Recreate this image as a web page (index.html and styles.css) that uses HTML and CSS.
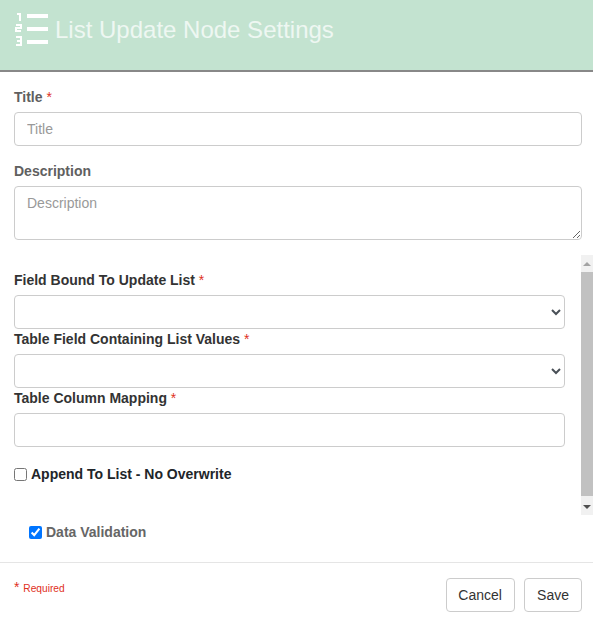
FILE: index.html
```html
<!DOCTYPE html>
<html lang="en">
<head>
  <meta charset="UTF-8">
  <meta name="viewport" content="width=device-width, initial-scale=1.0">
  <title>List Update Node Settings</title>
  <link rel="stylesheet" href="styles.css">
</head>
<body>
  <header class="header">
    <svg class="header-icon" width="34" height="34" viewBox="0 0 34 34" fill="none" stroke="#fff">
      <path d="M3 2h3v7M2 13h5v3h-5v3h5M2 25h5v8h-5M3 29h4" stroke-width="2"/>
      <path d="M13 4h21M13 17h21M13 30h21" stroke-width="4"/>
    </svg>
    <h1 class="header-title">List Update Node Settings</h1>
  </header>

  <main class="content">
    <div class="field">
      <label class="label">Title <span class="req">*</span></label>
      <input class="input" type="text" placeholder="Title">
    </div>
    <div class="field last">
      <label class="label">Description</label>
      <textarea class="input textarea" placeholder="Description"></textarea>
    </div>

    <div class="scroll-area">
      <div class="scroll-body">
        <label class="label dark">Field Bound To Update List <span class="req">*</span></label>
        <select class="input select"></select>
        <label class="label dark">Table Field Containing List Values <span class="req">*</span></label>
        <select class="input select"></select>
        <label class="label dark">Table Column Mapping <span class="req">*</span></label>
        <input class="input" type="text">
        <label class="check dark append"><input type="checkbox"> Append To List - No Overwrite</label>
      </div>
      <div class="scrollbar">
        <div class="arrow up"></div>
        <div class="track"><div class="thumb"></div></div>
        <div class="arrow down"></div>
      </div>
    </div>

    <label class="check validation"><input type="checkbox" checked> Data Validation</label>
  </main>

  <footer class="footer">
    <div class="required-note"><span class="star">*</span> Required</div>
    <div class="buttons">
      <button class="btn cancel" type="button">Cancel</button>
      <button class="btn" type="button">Save</button>
    </div>
  </footer>
</body>
</html>
```

FILE: styles.css
```css
* {
  box-sizing: border-box;
}
body {
  margin: 0;
  font-family: 'Liberation Sans', Arial, sans-serif;
  font-size: 14px;
  color: #212529;
  background: white;
}
.header {
  height: 72px;
  display: flex;
  align-items: flex-start;
  padding: 12px 0 0 14px;
  background: #c3e3d0;
  border-bottom: 2px solid #888;
}
.header-title {
  margin: 4px 0 0 7px;
  font-size: 24px;
  line-height: 28px;
  font-weight: normal;
  color: #eef7f2;
}
.content {
  padding: 17px 11px 0 14px;
}
.field {
  margin-bottom: 17px;
}
.field.last {
  margin-bottom: 15px;
}
.label {
  display: block;
  font-weight: bold;
  font-size: 14px;
  line-height: 16px;
  margin-bottom: 7px;
  color: #606060;
}
.label.dark {
  color: #333;
}
.req {
  color: #e0301e;
  font-weight: normal;
}
.input {
  display: block;
  width: 100%;
  height: 34px;
  padding: 6px 12px;
  font-family: inherit;
  font-size: 14px;
  color: #495057;
  background: white;
  border: 1px solid #ccc;
  border-radius: 4px;
}
.input::placeholder {
  color: #999;
}
.textarea {
  height: 54px;
  padding-top: 8px;
  resize: vertical;
}
.select {
  appearance: auto;
}
.scroll-area {
  display: flex;
  height: 260px;
  margin-right: -11px;
}
.scroll-body {
  flex: 1;
  padding: 17px 16px 0 0;
}
.scroll-body .input {
  margin-bottom: 2px;
}
.check {
  display: flex;
  align-items: center;
  gap: 4px;
  font-weight: bold;
  font-size: 14px;
  line-height: 16px;
}
.check input {
  margin: 0;
  width: 13px;
  height: 13px;
}
.append {
  margin-top: 19px;
}
.validation {
  margin: 9px 0 0 15px;
  color: #666;
}
.scrollbar {
  width: 12px;
  display: flex;
  flex-direction: column;
  background: #f1f1f1;
}
.arrow {
  height: 17px;
  display: flex;
  align-items: center;
  justify-content: center;
}
.arrow::before {
  content: "";
  border-left: 4px solid transparent;
  border-right: 4px solid transparent;
}
.arrow.up::before {
  border-bottom: 4px solid #a3a3a3;
}
.arrow.down::before {
  border-top: 4px solid #505050;
}
.track {
  flex: 1;
}
.thumb {
  height: 224px;
  background: #c1c1c1;
}
.footer {
  display: flex;
  justify-content: space-between;
  align-items: flex-start;
  height: 61px;
  margin-top: 22px;
  padding: 15px 11px 0 14px;
  border-top: 1px solid #e5e5e5;
}
.required-note {
  font-size: 10.2px;
  line-height: 18px;
  color: #e0301e;
}
.star {
  font-size: 14px;
  margin-right: 1px;
}
.buttons {
  display: flex;
  gap: 9px;
}
.btn {
  height: 34px;
  padding: 6px 12px;
  font-family: inherit;
  font-size: 14px;
  color: #333;
  background: white;
  border: 1px solid #ccc;
  border-radius: 4px;
}
.cancel {
  width: 69px;
  padding-left: 11px;
}
```
